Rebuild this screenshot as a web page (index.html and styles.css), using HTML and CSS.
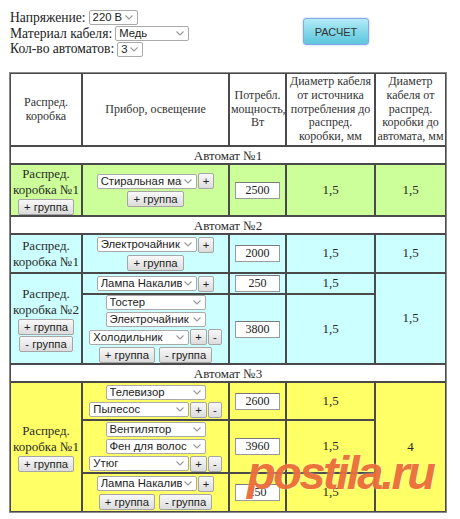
FILE: index.html
```html
<!DOCTYPE html>
<html lang="ru">
<head>
<meta charset="utf-8">
<title>Расчет сечения кабеля</title>
<link rel="stylesheet" href="styles.css">
</head>
<body>
<div class="top">
  <div class="params">
    <div class="line">Напряжение: <select class="sel s-volt"><option>220 В</option></select></div>
    <div class="line">Материал кабеля: <select class="sel s-mat"><option>Медь</option></select></div>
    <div class="line">Кол-во автоматов: <select class="sel s-cnt"><option>3</option></select></div>
  </div>
  <button class="calc">РАСЧЕТ</button>
</div>

<table class="grid">
  <colgroup>
    <col class="c1"><col class="c2"><col class="c3"><col class="c4"><col class="c5">
  </colgroup>
  <tr class="r-head">
    <td class="th">Распред.<br>коробка</td>
    <td class="th">Прибор, освещение</td>
    <td class="th">Потребл.<br>мощность,<br>Вт</td>
    <td class="th">Диаметр кабеля<br>от источника<br>потребления до<br>распред.<br>коробки, мм</td>
    <td class="th">Диаметр<br>кабеля от<br>распред.<br>коробки до<br>автомата, мм</td>
  </tr>

  <tr class="r-auto"><td colspan="5" class="auto">Автомат №1</td></tr>
  <tr class="green r52">
    <td><div class="box">Распред.<br>коробка №1<button class="btn">+ группа</button></div></td>
    <td>
      <div class="dev">
        <div class="ln"><select class="sel"><option>Стиральная машина</option></select><button class="btn sm">+</button></div>
        <div class="ln gr"><button class="btn">+ группа</button></div>
      </div>
    </td>
    <td><input class="pw" value="2500"></td>
    <td>1,5</td>
    <td>1,5</td>
  </tr>

  <tr class="r-auto"><td colspan="5" class="auto">Автомат №2</td></tr>
  <tr class="cyan r39">
    <td><div class="box">Распред.<br>коробка №1</div></td>
    <td>
      <div class="dev">
        <div class="ln"><select class="sel"><option>Электрочайник</option></select><button class="btn sm">+</button></div>
        <div class="ln gr"><button class="btn">+ группа</button></div>
      </div>
    </td>
    <td><input class="pw" value="2000"></td>
    <td>1,5</td>
    <td>1,5</td>
  </tr>
  <tr class="cyan r21">
    <td rowspan="2"><div class="box">Распред.<br>коробка №2<button class="btn">+ группа</button><button class="btn">- группа</button></div></td>
    <td>
      <div class="dev">
        <div class="ln"><select class="sel"><option>Лампа Накаливания</option></select><button class="btn sm">+</button></div>
      </div>
    </td>
    <td><input class="pw" value="250"></td>
    <td>1,5</td>
    <td rowspan="2">1,5</td>
  </tr>
  <tr class="cyan r70">
    <td>
      <div class="dev">
        <div class="ln"><select class="sel"><option>Тостер</option></select></div>
        <div class="ln"><select class="sel"><option>Электрочайник</option></select></div>
        <div class="ln"><select class="sel"><option>Холодильник</option></select><button class="btn sm">+</button><button class="btn sm">-</button></div>
        <div class="ln gr"><button class="btn">+ группа</button><button class="btn">- группа</button></div>
      </div>
    </td>
    <td><input class="pw" value="3800"></td>
    <td>1,5</td>
  </tr>

  <tr class="r-auto"><td colspan="5" class="auto">Автомат №3</td></tr>
  <tr class="yellow r38">
    <td rowspan="3"><div class="box">Распред.<br>коробка №1<button class="btn">+ группа</button></div></td>
    <td>
      <div class="dev">
        <div class="ln"><select class="sel"><option>Телевизор</option></select></div>
        <div class="ln"><select class="sel"><option>Пылесос</option></select><button class="btn sm">+</button><button class="btn sm">-</button></div>
      </div>
    </td>
    <td><input class="pw" value="2600"></td>
    <td>1,5</td>
    <td rowspan="3">4</td>
  </tr>
  <tr class="yellow r53">
    <td>
      <div class="dev">
        <div class="ln"><select class="sel"><option>Вентилятор</option></select></div>
        <div class="ln"><select class="sel"><option>Фен для волос</option></select></div>
        <div class="ln"><select class="sel"><option>Утюг</option></select><button class="btn sm">+</button><button class="btn sm">-</button></div>
      </div>
    </td>
    <td><input class="pw" value="3960"></td>
    <td>1,5</td>
  </tr>
  <tr class="yellow r39">
    <td>
      <div class="dev">
        <div class="ln"><select class="sel"><option>Лампа Накаливания</option></select><button class="btn sm">+</button></div>
        <div class="ln gr"><button class="btn">+ группа</button><button class="btn">- группа</button></div>
      </div>
    </td>
    <td><input class="pw" value="250"></td>
    <td>1,5</td>
  </tr>
</table>

<div class="watermark">postila.ru</div>
</body>
</html>
```

FILE: styles.css
```css
* { box-sizing: border-box; }

body {
  margin: 0;
  padding: 8px 0 0 10px;
  font: 13.6px/1.15 "Liberation Serif", "Times New Roman", serif;
  color: #222;
  background: #fff;
  position: relative;
}

.top {
  display: flex;
  align-items: flex-start;
  height: 64px;
}

.params {
  width: 293px;
  padding-top: 2px;
}

.line {
  height: 15.7px;
  display: flex;
  align-items: center;
  gap: 3px;
}

.sel {
  -webkit-appearance: none;
  appearance: none;
  height: 15px;
  width: 100px;
  margin: 0;
  padding: 0 14px 0 3px;
  border: 1px solid #a9a9a9;
  border-radius: 2px;
  background: #fff url("data:image/svg+xml,%3Csvg xmlns='http://www.w3.org/2000/svg' width='8' height='5'%3E%3Cpath d='M0.5 0.5l3.5 3.5 3.5-3.5' fill='none' stroke='%23999' stroke-width='1.1'/%3E%3C/svg%3E") no-repeat right 4px center;
  font: 11.3px/13px "Liberation Sans", Arial, sans-serif;
  color: #222;
  white-space: nowrap;
  overflow: hidden;
}

.s-volt { width: 49px; }
.s-mat { width: 74px; }
.s-cnt { width: 26px; padding-right: 12px; }

.calc {
  margin-top: 10px;
  width: 66px;
  height: 27px;
  padding: 0;
  border: 1px solid #86a8e8;
  border-radius: 3px;
  box-shadow: 0 0 2px #9db8f0;
  background: linear-gradient(#b5ecf6, #7fd6e8 55%, #5ec6dd);
  font: 11px "Liberation Sans", Arial, sans-serif;
  color: #333;
}

.grid {
  width: 438px;
  table-layout: fixed;
  border-collapse: separate;
  border-spacing: 0;
  border: 1px solid #8a8a8a;
  margin-left: -1px;
}

.c1 { width: 72px; }
.c2 { width: 147px; }
.c3 { width: 57px; }
.c4 { width: 89px; }
.c5 { width: 71px; }

.grid td {
  border: 1px solid #4a4a4a;
  padding: 0 1px;
  text-align: center;
  vertical-align: middle;
  font-size: 13px;
  color: #2a2a2a;
}

.grid td.th {
  font-size: 12px;
  line-height: 13.7px;
  color: #333;
}

.r-head { height: 73px; }
.r-auto { height: 18px; }
.r52 { height: 52px; }
.r39 { height: 39px; }
.r21 { height: 21px; }
.r70 { height: 70px; }
.r38 { height: 38px; }
.r53 { height: 53px; }

.grid td.auto {
  background: #fff;
  line-height: 15px;
}

.green td { background: #ccff99; }
.cyan td { background: #ccffff; }
.yellow td { background: #ffff66; }

.box {
  display: flex;
  flex-direction: column;
  align-items: center;
  line-height: 16px;
}

.box .btn { margin-top: 1px; }

.dev {
  display: flex;
  flex-direction: column;
  align-items: center;
  gap: 2px;
}

.ln {
  display: flex;
  align-items: center;
  gap: 1px;
}

.ln.gr { gap: 4px; }

.btn {
  height: 16px;
  padding: 0 5px;
  margin: 0;
  border: 1px solid #a5a5a5;
  border-radius: 2px;
  background: linear-gradient(#f8f8f8, #dcdcdc);
  font: 11.3px/14px "Liberation Sans", Arial, sans-serif;
  color: #222;
  white-space: nowrap;
}

.btn.sm { padding: 0 4px; }

.pw {
  width: 45px;
  height: 17px;
  margin: 0;
  padding: 0 2px;
  border: 1px solid #9a9a9a;
  border-top-color: #7a7a7a;
  background: #fff;
  text-align: center;
  font: 12px "Liberation Serif", "Times New Roman", serif;
  color: #222;
}

.watermark {
  position: absolute;
  left: 247px;
  top: 449px;
  font: italic bold 47px/1 "Liberation Sans", Arial, sans-serif;
  letter-spacing: -2.5px;
  color: rgba(233, 96, 40, 0.88);
  text-shadow: 0 0 2px rgba(255, 255, 255, 0.7);
  pointer-events: none;
}
```
